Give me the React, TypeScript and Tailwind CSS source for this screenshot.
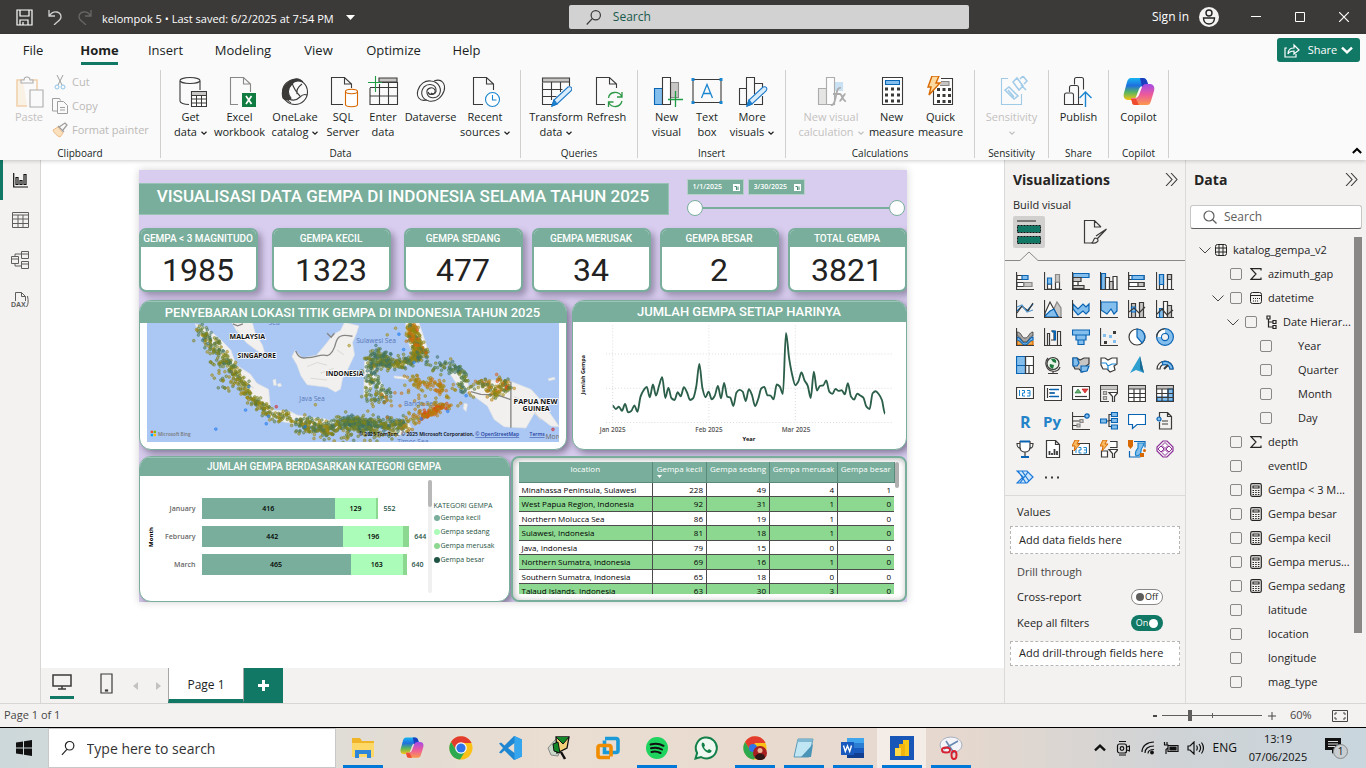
import React from 'react';

const K = '#3b3a39';
const BF = '#83beec';
const BS = '#0a64b4';
const GF = '#c8c6c4';

type P = { children?: React.ReactNode };

const Big = ({ children, dim }: P & { dim?: boolean }) => (
  <svg width="32" height="32" viewBox="0 0 32 32" fill="none" stroke={K} strokeWidth="1.1" className={dim ? 'opacity-40' : ''}>
    {children}
  </svg>
);
const Sm = ({ children }: P) => (
  <svg width="18" height="18" viewBox="0 0 18 18" fill="none" stroke={K} strokeWidth="1.2">
    {children}
  </svg>
);
const Chev = ({ className = '', s = 6 }: { className?: string; s?: number }) => (
  <svg width={s} height={s} viewBox="0 0 6 6" fill="none" stroke="currentColor" strokeWidth="1.2" className={'inline-block ' + className}>
    <path d="M0.5 1.8 3 4.2 5.5 1.8" />
  </svg>
);

const I = {
  paste: (
    <Big dim>
      <path d="M10 4H4v26h10" stroke="#e8963c" strokeWidth="1.6" fill="#fbe6c8" />
      <path d="M18 4h6v10" stroke="#e8963c" strokeWidth="1.6" />
      <path d="M8 7V4h3c0-4 6-4 6 0h3v3z" fill="#fafafa" />
      <path d="M17 14h13v17H17z" fill="#fafafa" />
    </Big>
  ),
  getData: (
    <Big>
      <path d="M5 5v20c0 2 4 3.500 9 3.500M25 5v9" />
      <ellipse cx="15" cy="4.500" rx="10" ry="3" />
      <path d="M16.500 15.500h15v15h-15z" fill="#fff" />
      <path d="M17 16h14v3H17z" fill={GF} stroke="none" />
      <path d="M16.500 19.500h15M16.500 23h15M16.500 27h15M21.500 19v11M26.500 19v11" strokeWidth="1" />
    </Big>
  ),
  excel: (
    <Big>
      <path d="M14 28.500H6.500v-27h13L26.500 8v8M19.500 1.500V8h7" stroke="#8a8886" />
      <path d="M18 17h14v14H18z" fill="#107c41" stroke="none" />
      <path d="m22 20 5.500 8M27.500 20 22 28" stroke="#fff" strokeWidth="1.700" />
    </Big>
  ),
  onelake: (
    <Big>
      <circle cx="16" cy="16" r="12.500" />
      <path d="M4 22C1 12 8 7 12 4.500c5-3 9-2 12 1.500-5-2-9-1-11 2-4 4-5 9-1 14-2 2-5 3-8 0z" fill={K} />
      <path d="M13 7c2 6 5 10 8 13M23 8c-4 3-6 6-5 10M10 23c4 2 8 1 11-2 2-2 5-3 7-2M12 27c-2-1-3-2-4-5" />
    </Big>
  ),
  sql: (
    <Big>
      <path d="M16 28.500H4.500v-27h13L24.500 8v4M17.500 1.500V8h7" />
      <path d="M18.500 16v12.500c0 3 12 3 12 0V16" stroke="#d86800" fill="#fff" />
      <ellipse cx="24.500" cy="15.500" rx="6" ry="2.200" stroke="#d86800" fill="#fff" />
    </Big>
  ),
  enter: (
    <Big>
      <path d="M12 2h18v4H12z" fill={GF} />
      <path d="M3 12v16.500h27.500V6.500H13M3 11.500h27.500M3 20h27.500M12.500 8v20M21.500 7v21" />
      <path d="M8.500 0v16M1 6.500h14" stroke="#1f9d44" />
    </Big>
  ),
  dataverse: (
    <Big>
      <path d="M12 24C4 26 1 20 3 14 5 8 10 4 16 5c9 1 11 9 8 14-3 4-11 4-12-2-1-5 6-7 8-3 1 3-2 5-4 3" />
      <path d="M19 5c8-3 12 3 10 10-3 8-9 11-15 10-8-2-9-9-5-14 4-4 12-3 12 3 1 5-7 6-8 2" />
    </Big>
  ),
  recent: (
    <Big>
      <path d="M14 28.500H4.500v-27h13L24.500 8v6M17.500 1.500V8h7" />
      <circle cx="23.500" cy="23.500" r="7" stroke="#1a86d0" fill="#fff" />
      <path d="M23.500 19v5h4" stroke="#1a86d0" />
    </Big>
  ),
  transform: (
    <Big>
      <path d="M2.500 2h27v4h-27z" fill={GF} />
      <path d="M12 28.500H2.500v-22M29.500 6v4M2.500 13.500h20M2.500 20.500h14M11.500 6v18M20.500 6v10" />
      <path d="m12 30 2-6 14-13c3-1 5 1 3 4L17 28z" fill="#d9ecfb" stroke="#1a78c8" />
      <path d="m12 30 2-6 3 4z" fill="#1a86d0" stroke="#1a78c8" />
    </Big>
  ),
  refresh: (
    <Big>
      <path d="M14 28.500H5.500v-27h13L25.500 8v4M18.500 1.500V8h7" />
      <path d="M17.500 22c1-7 10-7 13-2M31 16v5h-5M31 25c-2 7-10 7-13 2M17.500 31v-5h5" stroke="#2c9846" strokeWidth="1.300" />
    </Big>
  ),
  newVisual: (
    <Big>
      <path d="M3.500 12.500h8v16h-8z" fill={BF} stroke={BS} />
      <path d="M19.500 6.500h8v15h-8z" fill={GF} stroke="#8a8886" />
      <path d="M11.500 1.500h8v27h-8z" fill="#fff" />
      <path d="M24.500 15v16M17 23.500h15" stroke="#1f9d44" strokeWidth="1.300" />
    </Big>
  ),
  textBox: (
    <Big>
      <path d="M2 3.500h28v23H2z" />
      <path d="M.5 2h3v3h-3zM28.500 2h3v3h-3zM.5 25h3v3h-3zM28.500 25h3v3h-3z" fill="#1a86d0" stroke="none" />
      <path d="M10.500 22 16 8.500 21.500 22M12.500 17.500h7" stroke="#1a86d0" strokeWidth="1.300" />
    </Big>
  ),
  moreVisuals: (
    <Big>
      <path d="M12.500 28.500h-9v-16h7M10.500 28V1.500h8V18M18.500 7.500h8v4M26.500 20v8.500H18" />
      <path d="m11 30 2-6 14-13c3-1 5 1 3 4L16 28z" fill="#d9ecfb" stroke="#1a78c8" />
      <path d="m11 30 2-6 3 4z" fill="#1a86d0" stroke="#1a78c8" />
    </Big>
  ),
  newCalc: (
    <Big dim>
      <path d="M3.500 12.500h8v16h-8z" fill={GF} />
      <path d="M19.500 6.500h8v8h-8z" fill={BF} stroke={BF} />
      <path d="M11.500 1.500h8v27h-8z" fill="#fff" />
      <path d="M26 12c-4-1-4 4-5 8s-2 10-5 9M18 18h7M25 18c2 0 3 8 6 7M30.500 18c-2 0-4 7-6 7" strokeWidth="1.800" />
    </Big>
  ),
  newMeasure: (
    <Big>
      <path d="M6.500 1.500h20v27h-20z" fill="#fff" />
      <path d="M9.500 4.500h14v4h-14z" fill={BF} stroke={BS} />
      <path d="M9 13h15M9 19h15M9 25h15" stroke={K} strokeWidth="3" strokeDasharray="3 3" />
    </Big>
  ),
  quick: (
    <Big>
      <path d="M16 2.500h11.500v26h-19V15" fill="#fff" />
      <path d="M16 5.500h8v4h-9" fill={GF} stroke="#8a8886" />
      <path d="M12 13.500h14M12 19.500h14M12 25.500h14" stroke={K} strokeWidth="3" strokeDasharray="3 2.500" />
      <path d="M7 0h7l-3 7h4L4 19l2-8H3z" fill="#fbd9a0" stroke="#d86800" strokeWidth="1.400" />
    </Big>
  ),
  sens: (
    <Big dim>
      <path d="M12 2.500H5.500v26h20V18" stroke="#1a86d0" />
      <path d="m9 14 4-3 9 9-4 3zM12 14l6 7M17 6l4-4 6 8-4 4zM24 3l3-3 4 5-3 3M25 9l5 5" stroke="#1a86d0" strokeWidth="1.500" />
    </Big>
  ),
  publish: (
    <Big>
      <path d="M11.500 8.500v-5c0-1 .5-2 2-2h5c1.500 0 2 1 2 2v10M6.500 16v-4.500c0-1 .5-2 2-2h5c1.500 0 2 1 2 2V17M1.500 28.500V19c0-1 .5-2 2-2h5c1.500 0 2 1 2 2v9.500zM10.500 28.500H20M15.500 17v11" />
      <path d="M22.500 31V15.500M16.500 22l6-6 6 6" stroke="#1a86d0" strokeWidth="1.400" />
    </Big>
  ),
};

function Copilot({ size = 32, id }: { size?: number; id: string }) {
  return (
    <svg width={size} height={size} viewBox="0 0 32 32">
      <defs>
        <linearGradient id={id + 'a'} x1="0" y1="0" x2="0" y2="1">
          <stop offset="0" stopColor="#16b4f0" />
          <stop offset=".35" stopColor="#1f6fe0" />
          <stop offset=".65" stopColor="#57b560" />
          <stop offset="1" stopColor="#f8c410" />
        </linearGradient>
        <linearGradient id={id + 'b'} x1="0" y1="0" x2="0" y2="1">
          <stop offset="0" stopColor="#a34be8" />
          <stop offset=".5" stopColor="#ec5a9c" />
          <stop offset="1" stopColor="#fb9a4c" />
        </linearGradient>
      </defs>
      <path d="M8 2h12c2 0 3 1 4 3l1 5h-5c-2 0-3 1-4 3l-3 8c-1 2-2 3-4 3H5c-4 0-5-4-4-7L4 6c1-3 2-4 4-4z" fill={`url(#${id}a)`} />
      <path d="M17 2h3c2 0 3 1 4 3l2 6h-7z" fill="#1c3fc0" />
      <path d="M24 29H12c-2 0-3-1-3-3l-1-4h4c2 0 3-1 4-3l3-8c1-2 2-3 4-3h4c4 0 5 4 4 7l-3 10c-1 3-2 4-4 4z" fill={`url(#${id}b)`} />
      <path d="M12 29c-2 0-3-1-3-3l-1-3h5l3 6z" fill="#f04a30" />
    </svg>
  );
}

type RB = { w: string; icon: React.ReactNode; a: string; b?: string; chev?: boolean; dim?: boolean };
function RibbonButton({ w, icon, a, b, chev, dim }: RB) {
  return (
    <button className={`flex flex-col items-center gap-px ${w} ${dim ? 'text-[#c3c1bf]' : 'text-[#201f1e]'}`}>
      {icon}
      <span className="text-[11px] leading-[15px] whitespace-nowrap">
        {a}
        <br />
        {b}
        {chev && <Chev className={b ? 'ml-1' : ''} />}
      </span>
    </button>
  );
}
function Group({ w, label, children }: P & { w: string; label: string }) {
  return (
    <div className={`flex shrink-0 flex-col justify-between border-r border-[#d2d0ce] ${w}`}>
      <div className="flex justify-center pt-[6px]">{children}</div>
      <div className="text-center text-[10px] leading-[10px] text-[#201f1e]">{label}</div>
    </div>
  );
}

function TitleBar() {
  return (
    <header className="flex h-[34px] shrink-0 items-center bg-[#3b3a39] text-white">
      <div className="flex flex-1 items-center pl-[16px]">
        <svg width="17" height="17" viewBox="0 0 17 17" fill="none" stroke="#fff" strokeWidth="1.200"><path d="M1 1h15v15H1zM4 1v6h9V1M4 16v-5h8v5M7 13v3" /></svg>
        <svg width="16" height="16" viewBox="0 0 16 16" fill="none" stroke="#d0d0d0" strokeWidth="1.300" className="ml-[14px]"><path d="M2 1v6h6M2 7c5-7 12-4 12 1 0 3-3 4-7 8" /></svg>
        <svg width="16" height="16" viewBox="0 0 16 16" fill="none" stroke="#686766" strokeWidth="1.300" className="ml-[14px]"><path d="M14 1v6H8M14 7C9 0 2 3 2 8c0 3 3 4 7 8" /></svg>
        <span className="ml-[9px] pt-[3px] text-[11px] leading-4 whitespace-nowrap">kelompok 5 • Last saved: 6/2/2025 at 7:54 PM</span>
        <svg width="9" height="5" viewBox="0 0 9 5" className="ml-[12px]"><path d="M0 0h9L4.500 5z" fill="#fff" /></svg>
      </div>
      <label className="flex h-[24px] w-[400px] items-center rounded-[2px] bg-[#d2d2d2] pl-[17px]">
        <svg width="17" height="17" viewBox="0 0 17 17" fill="none" stroke="#3b3a39" strokeWidth="1.300"><circle cx="10.500" cy="6" r="5" /><path d="M7 9.500.8 16" /></svg>
        <input aria-label="Search" placeholder="Search" className="ml-[11px] w-full bg-transparent text-[12px] outline-none placeholder:text-[#185a4c]" />
      </label>
      <div className="flex w-[397px] items-center justify-end">
        <span className="text-[12px]">Sign in</span>
        <svg width="20" height="20" viewBox="0 0 20 20" className="ml-[10px]"><circle cx="10" cy="10" r="10" fill="#f3f2f1" /><circle cx="10" cy="6" r="3" fill="none" stroke="#222" strokeWidth="1.400" /><path d="M4.500 11h11c0 8-11 8-11 0z" fill="none" stroke="#222" strokeWidth="1.400" /></svg>
        <button aria-label="Minimize" className="ml-[32px]"><svg width="10" height="10"><path d="M0 4.500h10" stroke="#fff" /></svg></button>
        <button aria-label="Maximize" className="ml-[34px]"><svg width="10" height="10"><path d="M.5.500h9v9h-9z" stroke="#fff" fill="none" /></svg></button>
        <button aria-label="Close" className="mr-[17px] ml-[34px]"><svg width="10" height="10"><path d="M0 0l10 10M10 0 0 10" stroke="#fff" strokeWidth="1.200" /></svg></button>
      </div>
    </header>
  );
}

const TABS = [
  ['File', 'w-[66px]'], ['Home', 'w-[67px]'], ['Insert', 'w-[65px]'], ['Modeling', 'w-[90px]'],
  ['View', 'w-[61px]'], ['Optimize', 'w-[89px]'], ['Help', 'w-[57px]'],
];

function Ribbon() {
  return (
    <div className="relative z-10 shrink-0 bg-[#fafafa] shadow-[0_1px_4px_rgba(0,0,0,0.2)]">
      <nav className="flex h-[32px] items-center text-[13px] text-[#201f1e]">
        {TABS.map(([t, w]) => (
          <button key={t} className={`flex h-full flex-col items-center pt-[7px] ${w} ${t === 'Home' ? 'font-bold' : ''}`}>
            <span className="leading-[18px]">{t}</span>
            {t === 'Home' && <span className="mt-[3px] h-[3px] w-[37px] bg-[#117865]" />}
          </button>
        ))}
        <button className="mr-[6px] ml-auto flex h-[24px] w-[83px] items-center justify-center rounded-[3px] bg-[#117865] text-[11px] text-white">
          <svg width="16" height="15" viewBox="0 0 16 15" fill="none" stroke="#fff" strokeWidth="1.200" className="mr-[8px]"><path d="M3 5H1v9h11v-3M4 11c0-5 3-6 6-6V2l5 5-5 4V8c-3 0-5 1-6 3z" /></svg>
          Share
          <Chev s={12} className="ml-[4px]" />
        </button>
      </nav>
      <div className="flex h-[94px] items-stretch pt-[4px] pb-[2px]">
        <Group w="w-[161px]" label="Clipboard">
          <div className="flex w-full pl-[12px] text-[11px] text-[#c3c1bf]">
            <RibbonButton w="w-[34px]" icon={I.paste} a="Paste" dim />
            <div className="-mt-[6px] ml-[6px] flex flex-col">
              <button className="flex h-[24px] items-center gap-[4px] text-[#bbb9b7]">
                <svg width="16" height="16" viewBox="0 0 16 16" fill="none" stroke="#a19f9d"><path d="m5 1 5 10M11 1 6 11" /><circle cx="5" cy="13" r="2" stroke="#8cc4e8" /><circle cx="11" cy="13" r="2" stroke="#8cc4e8" /></svg>
                Cut
              </button>
              <button className="flex h-[24px] items-center gap-[4px] text-[#bbb9b7]">
                <svg width="16" height="16" viewBox="0 0 16 16" fill="none" stroke="#a19f9d"><path d="M5 13H.5V.5h7l1 2M5.500 3.500h6l4 4v8h-10zM8 9.500h5M8 12h5" /></svg>
                Copy
              </button>
              <button className="flex h-[24px] items-center gap-[4px] whitespace-nowrap text-[#bbb9b7]">
                <svg width="16" height="16" viewBox="0 0 16 16" fill="none"><path d="m1 8 5-3 5 6-3 4c-3-1-6-4-7-7z" fill="#fbe0be" stroke="#eebb88" /><path d="m7 5 6-4 2 2-4 5M6 4l6 6" stroke="#a19f9d" strokeWidth="1.300" /></svg>
                Format painter
              </button>
            </div>
          </div>
        </Group>
        <Group w="w-[360px]" label="Data">
          <RibbonButton w="w-[45px]" icon={I.getData} a="Get" b="data" chev />
          <RibbonButton w="w-[53px]" icon={I.excel} a="Excel" b="workbook" />
          <RibbonButton w="w-[58px]" icon={I.onelake} a="OneLake" b="catalog" chev />
          <RibbonButton w="w-[38px]" icon={I.sql} a="SQL" b="Server" />
          <RibbonButton w="w-[42px]" icon={I.enter} a="Enter" b="data" />
          <RibbonButton w="w-[53px]" icon={I.dataverse} a="Dataverse" />
          <RibbonButton w="w-[56px]" icon={I.recent} a="Recent" b="sources" chev />
        </Group>
        <Group w="w-[117px]" label="Queries">
          <RibbonButton w="w-[55px]" icon={I.transform} a="Transform" b="data" chev />
          <RibbonButton w="w-[46px]" icon={I.refresh} a="Refresh" />
        </Group>
        <Group w="w-[148px]" label="Insert">
          <RibbonButton w="w-[41px]" icon={I.newVisual} a="New" b="visual" />
          <RibbonButton w="w-[40px]" icon={I.textBox} a="Text" b="box" />
          <RibbonButton w="w-[50px]" icon={I.moreVisuals} a="More" b="visuals" chev />
        </Group>
        <Group w="w-[189px]" label="Calculations">
          <RibbonButton w="w-[69px]" icon={I.newCalc} a="New visual" b="calculation" chev dim />
          <RibbonButton w="w-[52px]" icon={I.newMeasure} a="New" b="measure" />
          <RibbonButton w="w-[46px]" icon={I.quick} a="Quick" b="measure" />
        </Group>
        <Group w="w-[74px]" label="Sensitivity">
          <RibbonButton w="w-[56px]" icon={I.sens} a="Sensitivity" chev dim />
        </Group>
        <Group w="w-[60px]" label="Share">
          <RibbonButton w="w-[46px]" icon={I.publish} a="Publish" />
        </Group>
        <Group w="w-[60px]" label="Copilot">
          <RibbonButton w="w-[46px]" icon={<Copilot id="rib" />} a="Copilot" />
        </Group>
        <button aria-label="Collapse the ribbon" className="mt-auto mr-[4px] mb-[2px] ml-auto flex h-[10px] rotate-180"><Chev s={10} /></button>
      </div>
    </div>
  );
}

function LeftRail() {
  const item = 'flex h-[40px] w-full items-center justify-center border-l-[3px] pr-[3px]';
  return (
    <nav className="flex w-[41px] shrink-0 flex-col border-r border-[#d8d6d4] bg-[#f3f2f1] text-[#605e5c]">
      <button aria-label="Report view" className={item + ' border-[#117865]'}>
        <svg width="15" height="15" viewBox="0 0 15 15" fill="none" stroke="#111" strokeWidth="1.200"><path d="M.7 0v14H15M3 11.500V4.500h2v7zM7 11.500v-4h2v4zM11 11.500v-10h2v10z" /></svg>
      </button>
      <button aria-label="Table view" className={item + ' border-transparent'}>
        <svg width="17" height="16" viewBox="0 0 17 16" fill="none" stroke="currentColor"><path d="M.5.500h16v15H.500zM.5 3h16M.5 7h16M.5 11.500h16M6 3v12M11 3v12" /></svg>
      </button>
      <button aria-label="Model view" className={item + ' border-transparent'}>
        <svg width="18" height="18" viewBox="0 0 18 18" fill="none" stroke="currentColor"><path d="M.5 5.500h7v7h-7zM.5 8h7M10.500.5h7v7h-7zM10.500 3h7M10.500 10.500h7v7h-7zM10.500 13h7M4 5V3h6M4 13v2h6" /></svg>
      </button>
      <button aria-label="DAX query view" className={item + ' border-transparent'}>
        <svg width="18" height="18" viewBox="0 0 18 18" fill="none" stroke="currentColor"><path d="M4.500 10V1.500h6l4 4V10M10.500 1.500v4h4M16.500 5c1 5 1 8-1 11" /><text x="0" y="16" fontSize="7" fontWeight="700" fill="currentColor" stroke="none" fontFamily="Liberation Sans">DAX</text></svg>
      </button>
    </nav>
  );
}

const CARDS = [['GEMPA < 3 MAGNITUDO', '1985'], ['GEMPA KECIL', '1323'], ['GEMPA SEDANG', '477'], ['GEMPA MERUSAK', '34'], ['GEMPA BESAR', '2'], ['TOTAL GEMPA', '3821']];

/* Map: land outlines and epicentre clusters share one coordinate space, three units per pixel. */
const LAND = [
  'M165 72 200 84 240 118 272 150 288 195 330 222 350 250 385 268 390 320 372 326 330 290 290 240 250 190 215 140 180 108Z',
  'M275 68H336L345 100 366 135 375 165 350 152 318 128 290 95Z',
  'M600 92 612 68 655 78 648 100 636 128 642 165 622 208 606 236 600 268 585 276 560 262 500 254 482 228 470 195 455 170 464 152 486 174 528 166 560 128 578 104Z',
  'M370 322 400 330 450 334 470 345 500 350 552 356 596 372 590 386 500 376 430 366 375 345Z',
  'M672 185 700 175 760 192 800 180 800 195 740 205 700 200 710 225 745 290 730 300 700 240 685 290 670 290Z',
  'M940 200 975 215 985 268 1050 240 1112 245 1170 268 1200 300 1255 380 1230 378 1180 340 1155 384 1090 380 1060 358 1040 318 995 285 955 262 930 225Z',
  'M795 68 835 68 862 150 820 170 800 120Z',
  'M620 368H700V384H620ZM745 400 805 370 812 384 770 410Z',
  'M1222 236 1240 232 1242 238 1224 242Z',
  'M412 252 420 250 424 258 414 260ZM398 240 406 238 408 256 400 256Z',
  'M760 228 800 232 800 238 762 234ZM970 310 980 312 976 334 968 326Z',
];
type Cl = { p: number[][]; n: number; s: number; c: string[] };
const OL = ['#8d8410', '#7c8420', '#a28a10', '#5c7a40'];
const GR = ['#4c7a50', '#5c8040', '#7c8420', '#3c7068'];
const OR = ['#b88010', '#c87410', '#9c8410', '#a08c18'];
const RD = ['#d84c10', '#d86010', '#b88010'];
const CLUSTERS: Cl[] = [
  { p: [[172, 78], [210, 125], [245, 175], [285, 215]], n: 150, s: 17, c: [...GR, ...OL] },
  { p: [[195, 150], [240, 215], [265, 262]], n: 34, s: 22, c: OL },
  { p: [[285, 215], [310, 260], [345, 305], [400, 345], [480, 365]], n: 190, s: 15, c: OL },
  { p: [[480, 370], [560, 385], [640, 370], [720, 375], [790, 370]], n: 360, s: 16, c: [...OL, ...GR] },
  { p: [[600, 365], [700, 375]], n: 170, s: 17, c: GR },
  { p: [[480, 395], [640, 405], [780, 395]], n: 70, s: 18, c: OL },
  { p: [[810, 70], [820, 120], [845, 165]], n: 230, s: 16, c: [...OR, ...OL, '#d05c10'] },
  { p: [[680, 185], [740, 195], [800, 185], [840, 165]], n: 200, s: 14, c: [...OL, ...GR] },
  { p: [[700, 165], [745, 185]], n: 70, s: 18, c: GR },
  { p: [[680, 210], [700, 240], [740, 290], [680, 290]], n: 100, s: 18, c: GR },
  { p: [[810, 245], [860, 250], [915, 265]], n: 80, s: 16, c: OR },
  { p: [[840, 350], [880, 335], [912, 315]], n: 100, s: 9, c: RD },
  { p: [[790, 375], [840, 340], [900, 300]], n: 50, s: 18, c: OR },
  { p: [[860, 185], [930, 205], [970, 220], [960, 280]], n: 95, s: 15, c: GR },
  { p: [[990, 270], [1030, 245], [1060, 285], [1105, 245]], n: 90, s: 15, c: [...OR, ...OL] },
  { p: [[1070, 235], [1105, 265]], n: 34, s: 13, c: [...RD, ...OL] },
  { p: [[700, 310], [820, 290], [960, 300]], n: 36, s: 28, c: OR },
];
function makeDots() {
  let seed = 41;
  const r = () => ((seed = (seed * 16807) % 2147483647) / 2147483647);
  const out: { x: number; y: number; c: string }[] = [];
  CLUSTERS.forEach(({ p, n, s, c }) => {
    for (let i = 0; i < n; i++) {
      const t = r() * (p.length - 1);
      const k = Math.floor(t);
      const f = t - k;
      const g = () => (r() + r() + r() - 1.5) * s * 1.3;
      out.push({ x: p[k][0] + (p[k + 1][0] - p[k][0]) * f + g(), y: p[k][1] + (p[k + 1][1] - p[k][1]) * f + g(), c: c[Math.floor(r() * c.length)] });
    }
  });
  [[227, 387], [316, 330], [378, 371], [384, 348], [775, 103], [789, 149], [820, 187], [842, 356], [921, 334], [976, 287], [494, 380], [326, 260]].forEach(([x, y]) => out.push({ x, y, c: '#1878f0' }));
  [[408, 320], [1236, 388]].forEach(([x, y]) => out.push({ x, y, c: '#d82020' }));
  [[626, 137], [525, 314], [740, 105], [930, 177], [765, 85]].forEach(([x, y]) => out.push({ x, y, c: '#a28a10' }));
  return out.filter((d) => d.y > 72);
}
const DOTS = makeDots();

function QuakeMap() {
  const big = { fontFamily: 'Open Sans', fontWeight: 700, fontSize: 21, fill: '#111', stroke: '#fff', strokeWidth: 4, paintOrder: 'stroke' as const };
  const sea = { fontFamily: 'Open Sans', fontSize: 20, fill: '#5878b8' };
  return (
    <svg viewBox="0 0 411 119" preserveAspectRatio="xMidYMid slice" className="block h-full w-full bg-[#abc7f3]" role="img" aria-label="Map of earthquake locations in Indonesia">
      <g transform="translate(-7 -23) scale(.33333)">
        <g fill="#f1f0ee" stroke="#dfe3e6" strokeWidth="2" strokeLinejoin="round">{LAND.map((d) => <path key={d} d={d} />)}</g>
        <path d="M500 200l30-12 30 8M540 220l40-15M510 235l50 5M590 150l20 15M1120 290l40 20 40 50M300 230l40 35M290 90l20 25" stroke="#dadad6" strokeWidth="3" fill="none" />
        <path d="M466 153c8 20 20 24 34 20 20 2 40-12 60-6 12-2 22-20 28-44 8-20 24-18 48-14M560 100l12 12 10-12M1110 245v138M990 275l30 8 50 2 40 14M278 72l14 6 16-6" stroke="#858585" strokeWidth="4" fill="none" />
        <text x="385" y="74" {...sea}>Sea</text>
        <text x="647" y="128" {...sea}>Sulawesi Sea</text>
        <text x="477" y="303" {...sea}>Java Sea</text>
        <text x="770" y="431" {...sea}>Timor Sea</text>
        <text x="790" y="318" {...sea}>Banda Sea</text>
        {DOTS.map((d, i) => <circle key={i} cx={d.x} cy={d.y} r="4.200" fill={d.c} fillOpacity=".5" stroke={d.c} strokeOpacity=".9" strokeWidth="1.600" />)}
        <text x="268" y="117" {...big}>MALAYSIA</text>
        <text x="292" y="173" {...big} fontSize={20}>SINGAPORE</text>
        <text x="556" y="228" {...big} fontSize={20}>INDONESIA</text>
        <text x="1118" y="312" {...big} fontSize={22}>PAPUA NEW</text>
        <text x="1145" y="334" {...big}>GUINEA</text>
        <text x="1214" y="416" fontSize="20" fill="#666" fontFamily="Open Sans">Moresby</text>
        <path d="M32 392h7v7h-7z" fill="#f25022" /><path d="M41 392h7v7h-7z" fill="#7fba00" /><path d="M32 401h7v7h-7z" fill="#00a4ef" /><path d="M41 401h7v7h-7z" fill="#ffb900" />
        <text x="54" y="407" fontSize="14" fill="#777" fontFamily="Open Sans" fontWeight="600">Microsoft Bing</text>
        <text x="655" y="409" fontSize="15" fill="#000" fontFamily="Open Sans" fontWeight="600">© 2025 TomTom, © 2025 Microsoft Corporation, <tspan fill="#1c3c9c" textDecoration="underline">© OpenStreetMap</tspan></text>
        <text x="1166" y="409" fontSize="15" fill="#1c3c9c" fontFamily="Open Sans" fontWeight="600" textDecoration="underline">Terms</text>
      </g>
    </svg>
  );
}

const DAILY = [332, 342, 335, 347, 327, 352, 348, 331, 350, 305, 286, 276, 307, 269, 302, 272, 247, 309, 279, 310, 315, 292, 304, 277, 292, 315, 310, 275, 208, 280, 307, 290, 313, 302, 273, 310, 264, 305, 308, 333, 293, 285, 290, 318, 283, 300, 333, 313, 281, 276, 301, 302, 313, 269, 275, 297, 116, 190, 240, 271, 260, 233, 257, 272, 309, 231, 287, 273, 272, 257, 290, 297, 282, 288, 286, 298, 265, 305, 314, 296, 302, 308, 335, 342, 295, 289, 298, 315, 356];
function linePath() {
  const dx = 9.2;
  const m = DAILY.map((y, i) => {
    if (i === 0 || i === DAILY.length - 1) return 0;
    const a = y - DAILY[i - 1];
    const b = DAILY[i + 1] - y;
    return a * b <= 0 ? 0 : (2 * a * b) / (a + b);
  });
  return DAILY.map((y, i) => {
    const x = 160 + i * dx;
    return i === 0 ? `M${x} ${y}` : `C${x - dx * 0.667} ${DAILY[i - 1] + m[i - 1] / 3} ${x - dx / 3} ${y - m[i] / 3} ${x} ${y}`;
  }).join('');
}

function LineChart() {
  const t = { fontFamily: 'Open Sans', fontSize: 19, fill: '#555', fontWeight: 600 };
  return (
    <svg viewBox="42 84 990 370" className="block h-full w-full" role="img" aria-label="Daily earthquake count, January to March 2025">
      <path d="M140 178H990M140 280H990M140 382H990M160 93V382M446 93V382M703 93V382" stroke="#ddd" strokeWidth="3" strokeDasharray="3 6" fill="none" />
      <path d={linePath()} fill="none" stroke="#2b5f4a" strokeWidth="5.500" strokeLinejoin="round" />
      <text x="160" y="410" textAnchor="middle" {...t}>Jan 2025</text>
      <text x="446" y="410" textAnchor="middle" {...t}>Feb 2025</text>
      <text x="705" y="410" textAnchor="middle" {...t}>Mar 2025</text>
      <text x="565" y="438" textAnchor="middle" {...t} fontSize={17} fill="#111" fontWeight={700}>Year</text>
      <text transform="translate(78 240) rotate(-90)" textAnchor="middle" {...t} fontSize={16} fill="#111" fontWeight={700}>Jumlah Gempa</text>
    </svg>
  );
}

const BARS = [
  { m: 'January', v: [416, 129, 7], kc: '416', sd: '129', tot: '552' },
  { m: 'February', v: [442, 188, 18], kc: '442', sd: '196', tot: '644' },
  { m: 'March', v: [465, 163, 12], kc: '465', sd: '163', tot: '640' },
];
const LEGEND = [['Gempa kecil', 'bg-[#78ae9b]'], ['Gempa sedang', 'bg-[#aafcb8]'], ['Gempa merusak', 'bg-[#8cd890]'], ['Gempa besar', 'bg-[#1f5444]']];
const ROWS = [
  ['Minahassa Peninsula, Sulawesi', 228, 49, 4, 1], ['West Papua Region, Indonesia', 92, 31, 1, 0], ['Northern Molucca Sea', 86, 19, 1, 0],
  ['Sulawesi, Indonesia', 81, 18, 1, 0], ['Java, Indonesia', 79, 15, 0, 0], ['Northern Sumatra, Indonesia', 69, 16, 1, 0],
  ['Southern Sumatra, Indonesia', 65, 18, 0, 0], ['Talaud Islands, Indonesia', 63, 30, 3, 0],
];

const RANGE = 'pointer-events-none col-start-1 row-start-1 h-[16px] w-full appearance-none bg-transparent [&::-webkit-slider-thumb]:pointer-events-auto [&::-webkit-slider-thumb]:h-[16px] [&::-webkit-slider-thumb]:w-[16px] [&::-webkit-slider-thumb]:appearance-none [&::-webkit-slider-thumb]:rounded-full [&::-webkit-slider-thumb]:border [&::-webkit-slider-thumb]:border-[#78ae9b] [&::-webkit-slider-thumb]:bg-white';

function DateBox({ v, label }: { v: string; label: string }) {
  return (
    <label className="flex h-[16px] w-[57px] items-center border border-[#b4d0c8] bg-[#78ae9b] pl-[5px]">
      <input aria-label={label} defaultValue={v} className="w-[40px] bg-transparent text-[7px] leading-[14px] font-semibold text-white outline-none" />
      <svg width="7" height="7" viewBox="0 0 7 7"><path d="M0 0h7v7H0z" fill="#fff" /><path d="M1.500 2.500h2V6M5 2.500V6" stroke="#4a8a76" fill="none" /></svg>
    </label>
  );
}

const PANEL = 'flex min-w-0 flex-col overflow-hidden rounded-[12px] border border-[#78ae9b] bg-white shadow-[3px_3px_7px_rgba(60,50,80,0.55)]';
const PHEAD = 'shrink-0 bg-[#78ae9b] text-center font-["Roboto",sans-serif] font-medium text-white shadow-[inset_0_1px_0_#9cc6b8]';

function BarPanel() {
  return (
    <section className={PANEL}>
      <h2 className={PHEAD + ' h-[19px] text-[10px] leading-[20px]'}>JUMLAH GEMPA BERDASARKAN KATEGORI GEMPA</h2>
      <div className="flex flex-1 items-center pr-[18px] pb-[4px]">
        <div className="flex w-[23px] justify-center"><span className="rotate-180 text-[6px] leading-[8px] font-bold [writing-mode:vertical-rl]">Month</span></div>
        <div className="flex flex-1 flex-col gap-[7px]">
          {BARS.map((b) => (
            <div key={b.m} className="flex h-[21px] items-center text-[7px] leading-[21px]">
              <span className="w-[33px] text-right font-semibold text-[#666]">{b.m}</span>
              <div className="ml-[6px] flex h-full text-center font-semibold text-black">
                <span className="bg-[#78ae9b]" style={{ width: b.v[0] * 0.3205 }}>{b.kc}</span>
                <span className="bg-[#aafcb8]" style={{ width: b.v[1] * 0.3205 }}>{b.sd}</span>
                <span className="bg-[#8cd890]" style={{ width: b.v[2] * 0.3205 }} />
              </div>
              <span className="ml-[5px] font-semibold text-[#1f5444]">{b.tot}</span>
            </div>
          ))}
        </div>
        <div className="h-[113px] w-[4px] rounded-full bg-[#f0f0f0]"><div className="h-[27px] rounded-full bg-[#b8b8b8]" /></div>
        <div className="mb-[5px] ml-[2px] w-[57px] text-[7px] leading-[14px] whitespace-nowrap text-[#1f5444]">
          <div className="leading-[10px]">KATEGORI GEMPA</div>
          {LEGEND.map(([l, c]) => (
            <div key={l} className="flex items-center gap-[1px]"><span className={'h-[6px] w-[6px] shrink-0 rounded-full ' + c} />{l}</div>
          ))}
        </div>
      </div>
    </section>
  );
}

function TablePanel() {
  return (
    <section className="flex min-w-0 overflow-hidden rounded-[8px] border-2 border-[#78ae9b] bg-white pt-[4px] pr-[6px] pb-[6px] pl-[6px] shadow-[inset_1px_1px_6px_rgba(0,0,0,0.3)]">
      <div className="flex-1 overflow-hidden">
        <table className="w-full table-fixed border-collapse text-[8px]">
          <colgroup><col className="w-[134px]" /><col className="w-[54px]" /><col className="w-[63px]" /><col className="w-[68px]" /><col /></colgroup>
          <thead>
            <tr className="h-[20px] bg-[#78ae9b] text-white [&>th]:border-r [&>th]:border-b [&>th]:border-[#5a8a7c] [&>th]:align-top [&>th]:leading-[14px] [&>th]:font-normal [&>th]:whitespace-nowrap">
              <th>location</th>
              <th>Gempa kecil<svg width="5" height="3" className="mt-[-1px] ml-[4px] block"><path d="M0 0h5L2.500 3z" fill="#fff" /></svg></th>
              <th>Gempa sedang</th><th>Gempa merusak</th><th>Gempa besar</th>
            </tr>
          </thead>
          <tbody>
            {ROWS.map((r, i) => (
              <tr key={String(r[0])} className={i % 2 ? 'h-[15px] bg-[#8cd890]' : 'h-[14px] bg-white'}>
                {r.map((c, j) => (
                  <td key={j} className={`border-r border-b border-[#4c4c4c] px-[3px] py-0 leading-[13px] whitespace-nowrap text-black last:border-r-0 ${j ? 'text-right' : ''}`}>{c}</td>
                ))}
              </tr>
            ))}
          </tbody>
        </table>
      </div>
      <div className="h-[26px] w-[4px] rounded-full bg-[#b0b0b0]" />
    </section>
  );
}

function Dashboard() {
  return (
    <div className="flex w-full max-w-[768px] flex-col overflow-hidden bg-[#d8cdee] shadow-[0_0_8px_rgba(0,0,0,0.18)]">
      <div className="flex h-[58px] justify-between pr-[2px]">
        <h1 className="mt-[13px] h-[32px] w-[530px] border border-l-0 border-[#98c2b4] bg-[#78ae9b] text-center font-['Roboto',sans-serif] text-[17px] leading-[25px] font-medium whitespace-nowrap text-white">
          VISUALISASI DATA GEMPA DI INDONESIA SELAMA TAHUN 2025
        </h1>
        <div className="mt-[9px] flex w-[218px] flex-col gap-[5px]">
          <div className="flex gap-[4px]"><DateBox v="1/1/2025" label="Start date" /><DateBox v="3/30/2025" label="End date" /></div>
          <div className="grid items-center bg-[linear-gradient(#78ae9b,#78ae9b)] bg-[length:90%_2px] bg-center bg-no-repeat">
            <input type="range" aria-label="Range start" defaultValue={0} className={RANGE} />
            <input type="range" aria-label="Range end" defaultValue={100} className={RANGE} />
          </div>
        </div>
      </div>
      <div className="grid grid-cols-[133px_132px_128px_128px_128px_119px]">
        {CARDS.map(([t, v]) => (
          <section key={t} className="flex h-[64px] w-[119px] flex-col overflow-hidden rounded-[7px] border-2 border-[#78ae9b] bg-white shadow-[4px_4px_6px_rgba(60,50,80,0.4)]">
            <h2 className="h-[17px] shrink-0 bg-[#78ae9b] text-center font-['Roboto',sans-serif] text-[10px] leading-[17px] font-medium whitespace-nowrap text-white">{t}</h2>
            <div className="text-center font-['Roboto',sans-serif] text-[32px] leading-[46px] text-[#222]">{v}</div>
          </section>
        ))}
      </div>
      <div className="mt-[8px] grid grid-cols-[428px_335px] gap-[5px]">
        <section className={PANEL + ' h-[150px]'}>
          <h2 className={PHEAD + ' h-[22px] text-[13px] leading-[23px]'}>PENYEBARAN LOKASI TITIK GEMPA DI INDONESIA TAHUN 2025</h2>
          <div className="min-h-0 flex-1 px-[7px] pb-[7px]"><QuakeMap /></div>
        </section>
        <section className={PANEL + ' h-[150px]'}>
          <h2 className={PHEAD + ' h-[21px] text-[13px] leading-[22px]'}>JUMLAH GEMPA SETIAP HARINYA</h2>
          <div className="min-h-0 flex-1 pb-[2px]"><LineChart /></div>
        </section>
      </div>
      <div className="mt-[6px] grid h-[146px] grid-cols-[371px_396px] gap-[1px]">
        <BarPanel />
        <TablePanel />
      </div>
    </div>
  );
}

function PageTabs() {
  return (
    <div className="flex h-[35px] shrink-0 items-center bg-[#f3f2f1]">
      <button aria-label="Desktop layout" className="ml-[9px] flex h-full w-[24px] flex-col items-center border-b-0 pt-[6px]">
        <svg width="20" height="16" viewBox="0 0 20 16" fill="none" stroke="#3b3a39" strokeWidth="1.500"><path d="M1 1h18v11H1zM10 12v3M6 15h8" /></svg>
        <span className="mt-[6px] h-[3px] w-[24px] bg-[#117865]" />
      </button>
      <button aria-label="Mobile layout" className="-mt-[4px] ml-[26px]"><svg width="13" height="21" viewBox="0 0 13 21" fill="none" stroke="#3b3a39" strokeWidth="1.200"><path d="M1 1h11v19H1z" /><path d="M5.500 17h2v1h-2z" /></svg></button>
      <svg width="6" height="8" className="ml-[20px]"><path d="M5 0v8L0 4z" fill="#c4c2c0" /></svg>
      <svg width="6" height="8" className="ml-[16px]"><path d="M1 0v8l5-4z" fill="#c4c2c0" /></svg>
      <button className="ml-[7px] h-full w-[76px] border-r border-b-[4px] border-l border-[#a8a6a4] border-b-[#117865] bg-white pt-[3px] text-[12px] text-[#201f1e]">Page 1</button>
      <button aria-label="New page" className="flex h-full w-[39px] items-center justify-center bg-[#117865]"><svg width="11" height="11"><path d="M5.500 0v11M0 5.500h11" stroke="#fff" strokeWidth="3" /></svg></button>
    </div>
  );
}

const axis = <path d="M.5 0v17.500H18" />;
const VIZ: React.ReactNode[] = [
  <>{axis}<path d="M1 3.500h6v4H1zM1 10.500h7v4H1z" fill="#fff" /><path d="M6 3.500h6v4H6z" fill={BF} stroke={BS} /><path d="M8 10.500h8v4H8z" fill={GF} stroke="#8a8886" /></>,
  <>{axis}<path d="M3.500 12h4v5h-4zM11.500 10h4v7h-4z" fill="#fff" /><path d="M3.500 6h4v6h-4z" fill={BF} stroke={BS} /><path d="M11.500 2.500h4V10h-4z" fill={GF} stroke="#8a8886" /></>,
  <><path d="M1 1.500h16v4H1z" fill={BF} stroke={BS} /><path d="M1 5.500h8v4H1zM1 13.500h11v3H1z" fill={GF} /><path d="M1 9.500h5v4H1z" fill="#fff" />{axis}</>,
  <><path d="M1.500 1.500h4v16h-4z" fill={BF} stroke={BS} /><path d="M5.500 5.500h4v12h-4zM13 4.500h4v13h-4z" fill="#fff" /><path d="M9.500 9.500H13v8H9.500z" fill={GF} />{axis}</>,
  <>{axis}<path d="M1 3.500h15v4H1z" fill="#fff" /><path d="M4 3.500h12v4H4z" fill={BF} stroke={BS} /><path d="M1 10.500h15v4H1z" fill="#fff" /><path d="M10 10.500h6v4h-6z" fill={GF} /></>,
  <>{axis}<path d="M3.500 2.500h4v15h-4z" fill="#fff" /><path d="M3.500 2.500h4v10h-4z" fill={BF} stroke={BS} /><path d="M11.500 2.500h4v15h-4z" fill="#fff" /><path d="M11.500 2.500h4v5h-4z" fill={GF} /></>,
  <>{axis}<path d="m1 11 5-5 5 5 6-7" stroke={BS} /><path d="m1 13 5-7 6 5 5-8" /><path d="m1 7 5-2 5 7 6-2" stroke="#5a9bd0" /></>,
  <><path d="m6 17 7-15 4 6v9z" fill={GF} stroke="#8a8886" /><path d="m1 13 5-11 8 15H1z" fill="#fff" /><path d="m1 16 5-5 4-2 4 8H1z" fill={BF} stroke={BS} />{axis}</>,
  <><path d="m1 4 5 5 5-5 3 3 3-3v7l-3 3-3-3-5 4-5-6z" fill={BF} stroke={BS} />{axis}</>,
  <><path d="M1 2h16v9l-3 3-3-5-4 5-6-4z" fill={BF} stroke={BS} />{axis}</>,
  <>{axis}<path d="M3.500 3.500h4v14h-4zM11.500 2.500h4v15h-4z" fill={GF} /><path d="M3.500 7h4v5h-4z" fill={BF} stroke={BS} /><path d="m1 12 5-4 5 5 6-6" /></>,
  <>{axis}<path d="M3.500 8.500h4v9h-4z" fill={BF} stroke={BS} /><path d="M7.500 1.500h4v16h-4z" fill="#fff" /><path d="M11.500 5.500h4v12h-4z" fill={GF} /><path d="m1 14 5-5 5 6 6-5" /></>,
  <><path d="M1 4c5 0 4 6 8 6s4-6 8-6v4c-4 0-4 6-8 6S5 8 1 8z" fill="#a8a6a4" strokeWidth=".8" /><path d="M1 13h5l3 3 3-3h5v4H1z" fill="#f0a850" stroke="#d86800" /><path d="M1 9c4 0 4 6 8 6s4-6 8-6v3c-4 0-4 5-8 5s-4-5-8-5z" fill={BF} stroke={BS} />{axis}</>,
  <>{axis}<path d="M3.500 5.500h2v12h-2zM7 3h3v9H7M13.500 3.500h3v14h-3z" fill="#fff" /><path d="M8 3.500h3v9M11 12V6" stroke={BS} strokeWidth="2" /></>,
  <><path d="M.500 2h17v5H.500zM4 7h10v5H4zM6 12h6v4.500H6z" fill={BF} stroke={BS} /></>,
  <>{axis}<path d="M13 3h3v3h-3zM4 13h3v3H4z" fill={K} stroke="none" /><path d="M3 6h3v3H3zM9 7h3v3H9zM13 12h3v3h-3z" fill={BF} stroke="none" /></>,
  <><circle cx="9" cy="9" r="8" fill="#fff" /><path d="M9 9V1a8 8 0 0 1 5 14z" fill={BF} stroke={BS} /></>,
  <><circle cx="9" cy="9" r="6" stroke={BS} strokeWidth="6" /><circle cx="9" cy="9" r="6" stroke={BF} strokeWidth="3.600" /><path d="M3 9a6 6 0 0 1 6-6" stroke="#fff" strokeWidth="4" /><path d="M.8 9a8 8 0 0 1 8-8.200" /></>,
  <><path d="M.5.500h17v17H.500z" fill="#fff" /><path d="M.5.500h9v9h-9zM.5 9.500h9v8h-9z" fill={BF} stroke={BS} /><path d="M9.500 9.500h8M13 9.500v8M9.500 0v18" /></>,
  <><circle cx="9" cy="7.500" r="6" fill="#e8f2e8" /><path d="M7 3c4-1 6 1 5 4l-3-1zM6 8l4 1-1 4c-3-1-4-3-3-5z" fill="#1c7a3c" stroke="none" /><path d="M4 2C0 6 2 14 8 15c4 1 7-1 8-4M9 15v2M4 17.500h10" /></>,
  <><path d="M1 2h4l3 2 4-2h5v6l-3 2 1 4-5 2-3-3-4 0-2-4z" fill={GF} /><path d="M1 2h4l2 5-2 3H1zM9 10h8l-2 5-6 1z" fill={BF} stroke={BS} /></>,
  <><path d="M1 2h4l3 2 4-2h5v6l-3 2 1 4-5 2-3-3-4 0-2-4z" fill="#fff" /><path d="M1 7h5l2 3 4-2h4M8 10v4" stroke="#1a86d0" /></>,
  <><path d="M12 0 2 17l6-3 8 3z" fill="#2f9fd0" stroke="none" /><path d="M12 0v13l4 4z" fill="#1b6a94" stroke="none" /></>,
  <><path d="M1 13a8 8 0 0 1 16 0h-3a5 5 0 0 0-10 0z" fill="#fff" /><path d="M6 6a8 8 0 0 1 11 7h-3a5 5 0 0 0-7-4z" fill={BF} stroke={BS} /><path d="m8 13 4-4" strokeWidth="2" /></>,
  <><path d="M.5 3.500h17v11H.500z" fill="#fff" /><path d="M3.500 6v6M6 6.500h2.500v2.500H6.500V12H9M11 6.500h3V12h-3M11.500 9H14" stroke="#1a86d0" strokeWidth="1" /></>,
  <><path d="M.5 1.500h17v15H.500z" fill="#fff" /><path d="M3.500 4v10M5 5.500h9M5 9h5M5 12.500h9" /><path d="M6 5.500h9M6 9h5M6 12.500h9" stroke={BS} strokeWidth="1.600" /></>,
  <><path d="M.5 2.500h17v13H.500z" fill="#fff" /><path d="m3 9 3-4 3 4z" fill="#70b070" stroke="#1c7a3c" strokeWidth=".7" /><path d="m10 5 3 4 3-4z" fill="#e04040" stroke="#c02020" strokeWidth=".7" /><path d="M3 12.500h12" /></>,
  <><path d="M.5 2v15.500H9M17.500 8V1.500H.500V5h17" /><path d="M1 2h16v3H1z" fill={GF} stroke="none" /><path d="M3.500 7.500h3v3h-3zM3.500 12.500h3v3h-3z" fill={GF} stroke="#8a8886" /><path d="M9 8.500h9l-3.500 4V18h-2v-5.500z" fill="#fff" /></>,
  <><path d="M.5 1.500h17v16H.500z" fill="#fff" /><path d="M1 2h16v3H1z" fill={GF} stroke="none" /><path d="M.5 5h17M.5 9.500h17M.5 13.500h17M6 5v12M12 5v12" /></>,
  <><path d="M.5 1.500h17v16H.500z" fill="#fff" /><path d="M1 2h16v3H1z" fill={GF} stroke="none" /><path d="M12 5h5v12H1v-4h11z" fill={BF} stroke={BS} /><path d="M.5 5h17M.5 9.500h17M.5 13.500h17M6 5v12M12 5v12" /><path d="M.5 1.500h17v16H.500z" /></>,
  <text x="4" y="16" fontSize="16" fontWeight="700" fill="#2383c8" stroke="none" fontFamily="Open Sans">R</text>,
  <text x="-1" y="15" fontSize="15" fontWeight="700" fill="#2383c8" stroke="none" fontFamily="Open Sans">Py</text>,
  <>{axis}<path d="M1 4.500h12M1 9h8M1 13.500h4" /><circle cx="15" cy="4" r="2.200" fill={BF} stroke={BS} /><path d="M8 7.500h3v3H8zM5 12h3v3H5z" fill={GF} stroke="#8a8886" /></>,
  <><path d="M6 9h3M11 2.500H9v12h2M9 8.500h3" /><path d="M.500 7h6v4h-6zM11.500.500h6v4h-6zM11.500 6.500h6v4h-6zM11.500 13h6v4h-6z" fill={BF} stroke={BS} /></>,
  <path d="M.500 2.500h17v10H9l-4.500 4v-4h-4z" fill="#fff" stroke={BS} />,
  <><path d="M3.500 6V.5h8l4 4v12.500h-12V10M11.500.500v4h4M6 9h6M6 12h6" /><circle cx="3" cy="7" r="2" fill={BF} stroke={BS} /></>,
  <><path d="M4 1.500h10v6c0 6-10 6-10 0zM4 3.500H1C1 7 2 8 5 8.500M14 3.500h3c0 4-1 5-4 5M9 12v4" fill="#fff" /><path d="M4 1.500h10M5 17h8" stroke={BS} strokeWidth="1.800" /></>,
  <><path d="M2.500.500h9l4 4v13h-13zM11.500.500v4h4" fill="#fff" /><path d="M5.500 15v-4M8 15v-2M10.500 15V9M13 15v-4" strokeWidth="1.800" /></>,
  <><path d="M6 3.500h11.500v11H.500V10" fill="#fff" /><path d="M4 7v6M6.500 7.500H9V10H7v3h2.500M11.500 7.500h3V13h-3M12 10h2.500" stroke="#1a86d0" strokeWidth="1" /><path d="M3 0h4L5 4h3l-6 7 1-5H0z" fill="#f8b860" stroke="#d86800" strokeWidth="1" /></>,
  <><path d="M10 1.500h7v6h-7M1.500 11h6v6h-6z" fill="#fff" /><path d="M9 9.500h9l-3.500 4V18h-2v-4.500z" fill="#fff" /><path d="M3 0h4L5 4h3l-6 7 1-5H0z" fill="#f8b860" stroke="#d86800" strokeWidth="1" /></>,
  <><path d="M6 1.500h11v6M1.500 11v6h11" stroke={BS} /><path d="M10 3h6c0 4-3 4-3 8 0 3-2 5-5 5-2-4 1-6 2-8z" fill={BF} stroke="#1a86d0" /><path d="M0 0h5v6l-2.500 3L0 6z" fill="#d86800" stroke="none" /><path d="M12 13h4v4h-4z" fill="#d86800" stroke="none" /><circle cx="16.500" cy="10.500" r="1.500" fill="#d86800" stroke="none" /></>,
  <><path d="M7 1h4l6 6v4l-6 6H7l-6-6V7z" fill="#f3f2f1" stroke="#8c3098" /><path d="m9 2.500 3 3-3 3-3-3zM5 6l3 3-3 3-3-3zM13 6l3 3-3 3-3-3zM9 9.500l3 3-3 3-3-3z" stroke="#8c3098" fill="#fff" strokeWidth="1" /></>,
  <><path d="M1 3h10l6 6-6 6H1l6-6zM2 3l8 12M6 3l7 10M12 4 4 15" stroke="#1a78d8" fill="#cde6fa" /></>,
  <><path d="M1 8.500h2v2H1zM7 8.500h2v2H7zM13 8.500h2v2h-2z" fill={K} stroke="none" /></>,
];

const DBL = <svg width="13" height="13" viewBox="0 0 13 13" fill="none" stroke="#3b3a39" strokeWidth="1.100"><path d="m1 0 6 6.500L1 13M6 0l6 6.500L6 13" /></svg>;

function VizPanel() {
  const box = 'mx-auto flex w-[170px] items-center border border-dashed border-[#b8b6b4] bg-white pl-[8px] whitespace-nowrap';
  return (
    <aside className="flex w-[182px] shrink-0 flex-col border-x border-[#dcdad8] bg-[#f3f2f1] text-[11px] text-[#252423]">
      <div className="flex h-[39px] items-center justify-between pr-[7px] pl-[8px]">
        <h2 className="text-[14px] font-bold">Visualizations</h2>
        <button aria-label="Collapse Visualizations">{DBL}</button>
      </div>
      <div className="h-[17px] pl-[8px] leading-[12px]">Build visual</div>
      <div className="flex gap-[34px] pl-[8px]">
        <button aria-label="Build visual" className="flex h-[32px] w-[32px] items-center justify-center rounded-[2px] bg-[#d2d0ce]">
          <svg width="26" height="26" viewBox="0 0 26 26"><path d="M1 2h19" stroke="#222" /><path d="M1.500 6.500h23v7h-23zM1.500 17.500h23v7h-23z" fill="#117865" stroke="#111" strokeDasharray="2 1" /></svg>
        </button>
        <button aria-label="Format visual" className="flex h-[32px] w-[32px] items-center justify-center">
          <svg width="26" height="26" viewBox="0 0 26 26" fill="none" stroke="#3b3a39" strokeWidth="1.200"><path d="M9 24H2.500V1.500h10L19 8M12.500 1.500V8H19M24.500 10 15 20M24.500 10 14 17M9 24c3 0 2-4 4-5 3 0 4 3 2 4-2 2-4 1-6 1z" /></svg>
        </button>
      </div>
      <svg viewBox="0 0 180 13" className="block h-[13px] w-full" fill="none" stroke="#8a8886"><path d="M0 12.500h15L24 4l9 8.500h147" /></svg>
      <div className="grid grid-cols-[repeat(6,28px)] pt-[6px] pl-[6px]">
        {VIZ.map((v, i) => <button key={i} aria-label={`Visual ${i + 1}`} className="flex h-[28px] w-[28px] items-center justify-center"><Sm>{v}</Sm></button>)}
      </div>
      <div className="mt-[4px] border-t border-[#dcdad8] pt-[8px] pl-[12px] leading-[16px]">Values</div>
      <div className={box + ' mt-[6px] h-[28px]'}>Add data fields here</div>
      <div className="mt-[10px] pl-[12px] leading-[16px] text-[#484644]">Drill through</div>
      <div className="mt-[9px] flex h-[16px] items-center justify-between pr-[22px] pl-[12px]">
        Cross-report
        <button role="switch" aria-checked="false" aria-label="Cross-report" className="flex h-[16px] w-[32px] items-center justify-center gap-[1px] rounded-full border border-[#8a8886] bg-white text-[9px]"><span className="h-[8px] w-[8px] rounded-full bg-[#605e5c]" />Off</button>
      </div>
      <div className="mt-[10px] flex h-[16px] items-center justify-between pr-[22px] pl-[12px]">
        Keep all filters
        <button role="switch" aria-checked="true" aria-label="Keep all filters" className="flex h-[16px] w-[32px] items-center justify-center gap-[1px] rounded-full bg-[#117865] text-[9px] text-white">On<span className="h-[9px] w-[9px] rounded-full bg-white" /></button>
      </div>
      <div className={box + ' mt-[10px] h-[25px]'}>Add drill-through fields here</div>
    </aside>
  );
}

const ICONS: Record<string, React.ReactNode> = {
  sum: <svg width="12" height="12" viewBox="0 0 12 12" fill="none" stroke="#252423" strokeWidth="1.200"><path d="M11 2.500V.600H1l5 5.400-5 5.400h10V9.500" /></svg>,
  cal: <svg width="12" height="12" viewBox="0 0 12 12" fill="none" stroke="#252423"><rect x=".5" y=".5" width="11" height="11" rx="2" /><path d="M1 3.500h10" /><path d="M3 6.500h7M3 9h5" strokeDasharray="1 1" /></svg>,
  calc: <svg width="12" height="14" viewBox="0 0 12 14" fill="none" stroke="#252423" strokeWidth="1.200"><rect x=".7" y=".7" width="10.600" height="12.600" rx="1.500" /><path d="M3 3h6v2H3z" /><path d="M2.500 7.500h7M2.500 9.500h7M2.500 11.500h7" strokeDasharray="1.500 1.200" /></svg>,
  hier: <svg width="11" height="14" viewBox="0 0 11 14" fill="none" stroke="#252423" strokeWidth="1.200"><path d="M1 1h3v3H1zM7 5.500h3v3H7zM7 10.500h3v3H7zM2.500 4v8H7M2.500 7H7" /></svg>,
  tbl: <svg width="12" height="12" viewBox="0 0 12 12" fill="none" stroke="#252423"><rect x=".5" y=".5" width="11" height="11" rx="2" /><path d="M0 4h12M0 8h12M4 0v12M8 0v12" /></svg>,
};
const TREE: [string, number, string, boolean?][] = [
  ['azimuth_gap', 1, 'sum'], ['datetime', 1, 'cal', true], ['Date Hierar...', 2, 'hier', true], ['Year', 3, ''], ['Quarter', 3, ''], ['Month', 3, ''], ['Day', 3, ''],
  ['depth', 1, 'sum'], ['eventID', 1, ''], ['Gempa < 3 M...', 1, 'calc'], ['Gempa besar', 1, 'calc'], ['Gempa kecil', 1, 'calc'], ['Gempa merus...', 1, 'calc'], ['Gempa sedang', 1, 'calc'],
  ['latitude', 1, ''], ['location', 1, ''], ['longitude', 1, ''], ['mag_type', 1, ''],
];
const PAD = ['', 'pl-[26px]', 'pl-[41px]', 'pl-[56px]'];
const wideChev = <svg width="12" height="7" viewBox="0 0 12 7" fill="none" stroke="#484644"><path d="m.5.500 5.500 5.500L11.500.500" /></svg>;

function DataPanel() {
  return (
    <aside className="flex w-[180px] shrink-0 flex-col bg-[#f3f2f1] text-[11px] text-[#252423]">
      <div className="flex h-[39px] items-center justify-between pr-[8px] pl-[8px]">
        <h2 className="text-[14px] font-bold">Data</h2>
        <button aria-label="Collapse Data">{DBL}</button>
      </div>
      <label className="mx-[4px] mt-[6px] flex h-[24px] shrink-0 items-center rounded-[3px] border border-[#c8c6c4] border-b-[#605e5c] bg-white pl-[12px]">
        <svg width="14" height="14" viewBox="0 0 14 14" fill="none" stroke="#605e5c" strokeWidth="1.200" className="shrink-0"><circle cx="6" cy="6" r="5" /><path d="m9.500 9.500 4 4" /></svg>
        <input aria-label="Search fields" placeholder="Search" className="ml-[7px] w-full min-w-0 bg-transparent text-[12px] outline-none placeholder:text-[#605e5c]" />
      </label>
      <div className="flex min-h-0 flex-1 overflow-hidden pt-[8px]">
        <ul className="min-w-0 flex-1 pt-[1px] whitespace-nowrap">
          <li className="flex h-[24px] items-center pl-[13px]">{wideChev}<span className="mr-[6px] ml-[4px]">{ICONS.tbl}</span>katalog_gempa_v2</li>
          {TREE.map(([t, lv, ic, open]) => (
            <li key={t}>
              <label className={`flex h-[24px] items-center ${PAD[lv]}`}>
                <span className="w-[18px] shrink-0">{open && wideChev}</span>
                <input type="checkbox" className="h-[12px] w-[12px] shrink-0 appearance-none rounded-[2px] border border-[#8a8886]" />
                <span className="mr-[6px] ml-[8px] flex w-[12px] shrink-0 justify-center">{ICONS[ic]}</span>
                {t}
              </label>
            </li>
          ))}
        </ul>
        <div className="mr-[4px] h-[396px] w-[8px] shrink-0 bg-[#8a8886]" />
      </div>
    </aside>
  );
}

function StatusBar() {
  return (
    <footer className="flex h-[24px] shrink-0 items-center border-t border-[#d8d6d4] bg-[#f3f2f1] text-[11px] text-[#484644]">
      <span className="pl-[4px]">Page 1 of 1</span>
      <div className="ml-auto flex items-center">
        <button aria-label="Zoom out" className="h-[2px] w-[4px] bg-[#484644]" />
        <div className="relative ml-[5px] flex w-[100px] items-center">
          <input type="range" aria-label="Zoom" defaultValue={27} className="h-[12px] w-full appearance-none bg-transparent [&::-webkit-slider-runnable-track]:h-px [&::-webkit-slider-runnable-track]:bg-[#605e5c] [&::-webkit-slider-thumb]:mt-[-5px] [&::-webkit-slider-thumb]:h-[11px] [&::-webkit-slider-thumb]:w-[4px] [&::-webkit-slider-thumb]:appearance-none [&::-webkit-slider-thumb]:bg-[#605e5c]" />
          <span className="absolute left-1/2 h-[5px] w-px bg-[#605e5c]" />
        </div>
        <button aria-label="Zoom in" className="ml-[6px]"><svg width="8" height="8"><path d="M4 0v8M0 4h8" stroke="#484644" /></svg></button>
        <span className="ml-[14px] w-[24px]">60%</span>
        <button aria-label="Fit to page" className="mr-[18px] ml-[18px]"><svg width="16" height="12" viewBox="0 0 16 12" fill="none" stroke="#484644"><path d="M.5.500h15v11H.500zM3 5V3h2M11 3h2v2M3 7v2h2M11 9h2V7" /></svg></button>
      </div>
    </footer>
  );
}

const TB: { n: string; on?: boolean; active?: boolean; g: React.ReactNode }[] = [
  { n: 'File Explorer', on: true, g: <><path d="M1 2h8l2 3h12v16H1z" fill="#f0b429" /><path d="M1 7h22v14H1z" fill="#ffd968" /><path d="M4 22v-8h16v8h-4v-4H8v4z" fill="#2f86d8" /></> },
  { n: 'Copilot', g: <Copilot id="tb" size={24} /> },
  { n: 'Chrome', g: <><circle cx="12" cy="12" r="11.500" fill="#fbc116" /><path d="M2 6a11.500 11.500 0 0 1 20 0l.5 1H12L7 14z" fill="#e33b2e" /><path d="M2 6a11.500 11.500 0 0 0 9 17.500L17 14H7z" fill="#2da94f" /><circle cx="12" cy="12" r="5.800" fill="#fff" /><circle cx="12" cy="12" r="4.600" fill="#2f74e8" /></> },
  { n: 'Visual Studio Code', g: <><path d="M16 0 24 3.500v17L16 24 6.500 14.500 3 17.500 1 16.500 5 12 1 7.500 3 6.500 6.500 9.500zM16.500 7 10 12l6.500 5z" fill="#1f86d2" fillRule="evenodd" /><path d="M16.500 0 24 3.500v17L16.500 24z" fill="#35a6ee" /></> },
  { n: 'Mail tool', g: <><path d="m1 12 8-9 4 10-2 7-7-1z" fill="#c8d8c8" stroke="#888" /><path d="M9 1h13l-2 11-10 5z" fill="#f0d078" stroke="#111" strokeWidth="1.300" /><path d="m9 1 7 7 6-7M6 8l5-2 2 11-6-2z" fill="#128828" stroke="#111" /><path d="m14 16 4 7" stroke="#111" strokeWidth="2.500" /></> },
  { n: 'VMware', g: <><path d="M9 2.500h11a2 2 0 0 1 2 2v10a2 2 0 0 1-2 2H8.500v-12" fill="none" stroke="#1a9bd8" strokeWidth="3.600" /><path d="M14 21.500H4a2 2 0 0 1-2-2v-8a2 2 0 0 1 2-2h9a2 2 0 0 1 2 2v9" fill="none" stroke="#f08c00" strokeWidth="3.600" /></> },
  { n: 'Spotify', on: true, g: <><circle cx="12" cy="12" r="11" fill="#1ed35e" /><path d="M5.500 8.500c5-1.500 9-1 13 1.300M6 12.300c4-1.200 7.500-.8 11 1.200M6.500 16c3.500-1 6-.6 9 1" stroke="#111" strokeWidth="2" fill="none" strokeLinecap="round" /></> },
  { n: 'WhatsApp', g: <><path d="m1.500 22.500 1.600-5.500A10.500 10.500 0 1 1 7 21z" fill="#f0f8f2" stroke="#128048" strokeWidth="2" /><path d="M8.500 6.500c-3 2 2 10 6.500 10.500 1.500 0 3-1.500 2.500-2.500L15 13l-1.500 1.500c-2-1-3-2-3.500-3.500L11 9.500 10 7z" fill="#128048" /></> },
  { n: 'Chrome profile', on: true, g: <><circle cx="12" cy="12" r="11.500" fill="#fbc116" /><path d="M2 6a11.500 11.500 0 0 1 20 0l.5 1H12L7 14z" fill="#e33b2e" /><path d="M2 6a11.500 11.500 0 0 0 9 17.500L17 14H7z" fill="#2da94f" /><circle cx="10" cy="12" r="4" fill="#2f74e8" /><circle cx="17" cy="17" r="7" fill="#a82020" /><circle cx="17" cy="14.500" r="2.500" fill="#f0b898" /><path d="M12 22c0-6 10-6 10 0a7 7 0 0 1-10 0z" fill="#301818" /></> },
  { n: 'Notepad', on: true, g: <><path d="M6 3h15l-4 18H2z" fill="#bfe6f2" stroke="#5a9ab8" /><path d="M6 3h15l-1 3H5z" fill="#7fb8d0" /><path d="M19 21H9L21 8z" fill="#4a94b8" /></> },
  { n: 'Word', on: true, g: <><path d="M6 2h17v20H6z" fill="#41a5ee" /><path d="M6 7h17v5H6z" fill="#2b7cd3" /><path d="M6 12h17v5H6z" fill="#185abd" /><path d="M6 17h17v5H6z" fill="#103f91" /><path d="M0 6h13v13H0z" fill="#185abd" /><path d="m2.500 9.500 1.800 6L6.500 10l2.200 5.500 1.800-6" stroke="#fff" strokeWidth="1.400" fill="none" /></> },
  { n: 'Power BI', on: true, active: true, g: <><path d="M0 0h24v24H0z" fill="#1857b8" /><path d="M13 4h6v16h-6z" fill="#f8c818" /><path d="M9 8h6v12H9z" fill="#f0b410" /><path d="M5 12h6v8H5z" fill="#ffd848" /></> },
  { n: 'Snipping Tool', on: true, g: <><ellipse cx="12" cy="9" rx="11" ry="8" fill="#f4f4f8" stroke="#a8b0c0" /><path d="m5 13 14-8M7 5l8 12" stroke="#6888b0" strokeWidth="1.600" /><ellipse cx="7" cy="14" rx="4" ry="2.500" fill="none" stroke="#d82030" strokeWidth="2" /><ellipse cx="15" cy="19" rx="2.500" ry="4" fill="none" stroke="#d82030" strokeWidth="2" /></> },
];

function Taskbar() {
  return (
    <div className="flex h-[41px] shrink-0 items-stretch border-t border-black bg-[linear-gradient(90deg,#cdd8da_0%,#dfdcd6_24%,#eaddd1_40%,#e6d8ce_70%,#cfd3d6_86%,#c9d6dd_100%)] text-[#111]">
      <button aria-label="Start" className="flex w-[48px] items-center justify-center"><svg width="16" height="16"><path d="M0 2.500 7 1.500v6H0zM8 1.300 16 0v7.500H8zM0 8.500h7v6L0 13.500zM8 8.500h8V16l-8-1.300z" fill="#111" /></svg></button>
      <label className="flex w-[288px] items-center border border-[#c8c8c8] bg-white pl-[12px]">
        <svg width="15" height="16" viewBox="0 0 15 16" fill="none" stroke="#222" strokeWidth="1.300"><circle cx="9.500" cy="5.500" r="4.700" /><path d="M6.500 9.500 1 15.500" /></svg>
        <input aria-label="Type here to search" placeholder="Type here to search" className="ml-[12px] w-full bg-transparent text-[14px] outline-none placeholder:text-[#333]" />
      </label>
      <div className="flex pl-[2px]">
        {TB.map((t) => (
          <button key={t.n} aria-label={t.n} className={`flex w-[49px] flex-col items-center justify-between pt-[8px] ${t.active ? 'bg-white/50' : ''}`}>
            <svg width="24" height="24" viewBox="0 0 24 24">{t.g}</svg>
            <span className={`h-[3px] w-[40px] ${t.on ? 'bg-[#0078d7]' : ''}`} />
          </button>
        ))}
      </div>
      <div className="ml-auto flex items-center">
        <span className="flex h-[12px] rotate-180"><Chev s={12} /></span>
        <svg width="14" height="16" viewBox="0 0 14 16" fill="none" stroke="#111" strokeWidth="1.200" className="ml-[10px]"><rect x="1.500" y="4" width="9" height="9" rx="2" /><circle cx="6" cy="8.500" r="1.800" /><path d="M3 1.500h7M3 15h7M11 7l2.500-1v5L11 10" /></svg>
        <svg width="14" height="14" viewBox="0 0 14 14" fill="none" stroke="#111" strokeWidth="1.200" className="ml-[11px]"><path d="M1 11C1 5 6 1 13 1M4 12c0-4 3-7 9-7M7 12.500C7 10 9 8.500 13 8.500" /><circle cx="11" cy="11.500" r="1.300" fill="#111" /></svg>
        <svg width="16" height="14" viewBox="0 0 16 14" fill="none" stroke="#111" strokeWidth="1.200" className="ml-[8px]"><path d="M5 4.500h10v6H5zM4 1v3M1.500 1v3M1 4h4v3L3 8.500V13" /><path d="M7 6h6v3H7z" fill="#111" /></svg>
        <svg width="17" height="14" viewBox="0 0 17 14" fill="none" stroke="#111" strokeWidth="1.200" className="ml-[8px]"><path d="M1 5h2l4-4v12L3 9H1zM9.500 4.500c1 1.500 1 3.500 0 5M12 3c2 2.500 2 5.500 0 8M14.500 1.500c2.500 3.500 2.500 7.500 0 11" /></svg>
        <span className="ml-[9px] text-[12px]">ENG</span>
        <div className="ml-[11px] w-[60px] text-center text-[11px] leading-[18px] whitespace-nowrap">13:19<br />07/06/2025</div>
        <div className="relative mr-[18px] ml-[16px] h-[22px] w-[24px]">
          <svg width="18" height="18" viewBox="0 0 18 18"><path d="M1 1h16v12h-6l-3 4v-4H1z" fill="#111" /><path d="M4 4.500h10M4 7h10M4 9.500h7" stroke="#ddd" /></svg>
          <span className="absolute right-0 bottom-0 flex h-[15px] w-[15px] items-center justify-center rounded-full border border-[#888] bg-[#c8ced2] text-[10px]">1</span>
        </div>
      </div>
    </div>
  );
}

export default function App() {
  return (
    <div className="flex h-screen min-h-[768px] flex-col overflow-hidden bg-white font-['Open_Sans',sans-serif]">
      <TitleBar />
      <Ribbon />
      <div className="flex min-h-0 flex-1">
        <LeftRail />
        <main className="flex min-w-0 flex-1 flex-col">
          <div className="flex flex-1 items-start justify-center bg-white pt-[10px]">
            <Dashboard />
          </div>
          <PageTabs />
        </main>
        <VizPanel />
        <DataPanel />
      </div>
      <StatusBar />
      <Taskbar />
    </div>
  );
}
